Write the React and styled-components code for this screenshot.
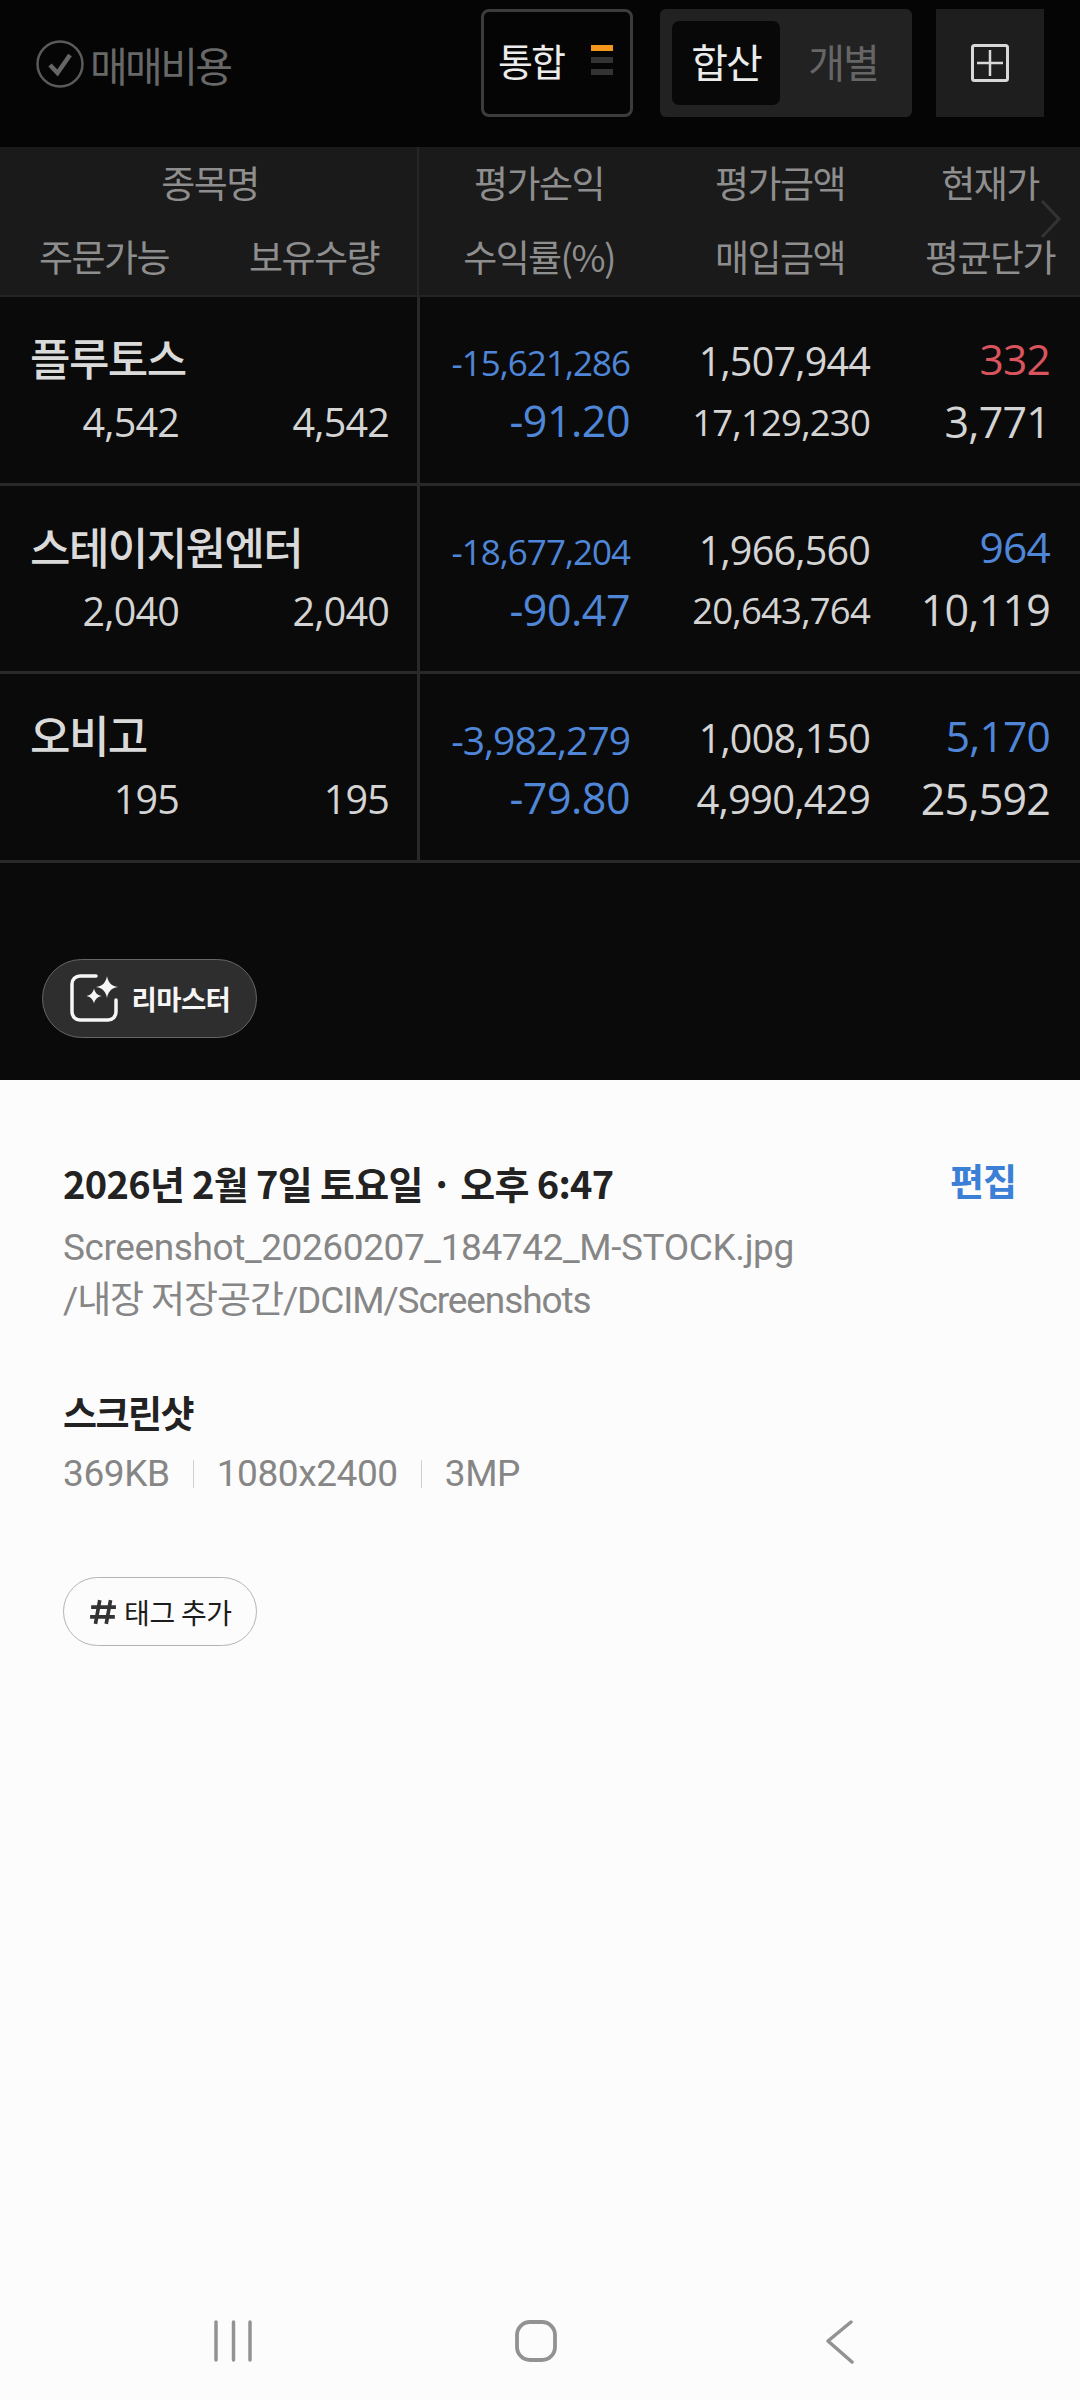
import React from 'react';
import styled, { createGlobalStyle } from 'styled-components';

const Global = createGlobalStyle`
  html, body { margin: 0; padding: 0; background: #fcfcfc; }
  body { font-family: "Roboto", "Noto Sans CJK KR", sans-serif; }
  * { box-sizing: border-box; }
`;

const KR = '"Noto Sans CJK KR", sans-serif';
const NUM = '"Open Sans", "Noto Sans CJK KR", sans-serif';
const BLUE = '#4f86d8';
const RED = '#d9545c';

const Page = styled.div`
  width: 1080px;
  height: 2400px;
  display: flex;
  flex-direction: column;
  background: #fcfcfc;
`;
const Dark = styled.div`
  height: 1080px;
  background: #0a0a0a;
  display: flex;
  flex-direction: column;
`;
const TopBar = styled.div`
  height: 147px;
  background: #050505;
  display: flex;
  align-items: flex-start;
  padding: 9px 36px 0 36px;
`;
const CostCheck = styled.div`
  display: flex;
  align-items: center;
  gap: 6px;
  margin-top: 31px;
  font: 400 41px/48px ${KR};
  letter-spacing: -2.6px;
  color: #686868;
`;
const Controls = styled.div`
  margin-left: auto;
  display: flex;
`;
const Merged = styled.div`
  width: 152px;
  height: 108px;
  border: 3px solid #3c3c3c;
  border-radius: 8px;
  display: flex;
  align-items: center;
  padding-left: 14px;
  gap: 27px;
  font: 400 38px/44px ${KR};
  letter-spacing: -2px;
  color: #ececec;
  margin-right: 27px;
  padding-bottom: 6px;
`;
const Bars = styled.div`
  display: flex;
  flex-direction: column;
  gap: 6px;
`;
const Bar = styled.div`
  width: 22px;
  height: 6px;
  background: ${({ $on }) => ($on ? '#f4961c' : '#333333')};
`;
const Segment = styled.div`
  width: 252px;
  height: 108px;
  background: #222222;
  border-radius: 6px;
  padding: 12px;
  display: flex;
  margin-right: 24px;
`;
const SegmentItem = styled.div`
  width: 108px;
  height: 84px;
  border-radius: 7px;
  background: ${({ $active }) => ($active ? '#080808' : 'transparent')};
  color: ${({ $active }) => ($active ? '#ececec' : '#666666')};
  margin-left: ${({ $active }) => ($active ? '0' : '9px')};
  font: 400 40px/80px ${KR};
  letter-spacing: -2px;
  text-align: center;
`;
const GridButton = styled.div`
  width: 108px;
  height: 108px;
  background: #1e1e1e;
  display: flex;
  align-items: center;
  justify-content: center;
`;

const Header = styled.div`
  position: relative;
  height: 150px;
  background: #1a1a1a;
  display: flex;
  font: 400 37px/50px ${KR};
  letter-spacing: -1.6px;
  color: #8e8e8e;
  border-bottom: 2px solid #242424;
`;
const HeaderLeft = styled.div`
  width: 419px;
  border-right: 2px solid #262626;
  display: grid;
  grid-template-columns: 208px 212px;
  grid-template-rows: 70px 77px;
  align-items: center;
  justify-items: center;
`;
const HeaderRight = styled.div`
  display: grid;
  grid-template-columns: 240px 242px 178px;
  grid-template-rows: 70px 77px;
  align-items: center;
  justify-items: center;
`;
const NameHead = styled.div`
  grid-column: 1 / 3;
`;
const Chevron = styled.svg`
  position: absolute;
  right: 18px;
  top: 52px;
`;

const Row = styled.div`
  height: 188.5px;
  display: flex;
  border-bottom: 3px solid #292929;
`;
const RowLeft = styled.div`
  width: 420px;
  border-right: 3px solid #292929;
  padding: 35px 0 0 30px;
`;
const Name = styled.div`
  font: 500 44px/50px ${KR};
  letter-spacing: -1.6px;
  color: #dadada;
`;
const Quantities = styled.div`
  display: grid;
  grid-template-columns: 149px 210px;
  margin-top: 15px;
  font: 400 39.5px/50px ${NUM};
  letter-spacing: -0.8px;
  color: #d4d4d4;
  text-align: right;
`;
const RowRight = styled.div`
  flex: 1;
  display: grid;
  grid-template-columns: 210px 240px 180px;
  grid-template-rows: 50px 50px;
  row-gap: 13px;
  padding-top: 39px;
  align-items: center;
  text-align: right;
`;
const Cell = styled.div`
  font-family: ${NUM};
  font-size: ${({ $size }) => $size || 39.5}px;
  letter-spacing: ${({ $tight }) => $tight || -0.8}px;
  color: ${({ $color }) => $color || '#d4d4d4'};
  line-height: 50px;
  margin-top: ${({ $lift }) => ($lift ? -$lift : 0)}px;
`;

const Remaster = styled.div`
  margin: 96px 0 0 42px;
  width: 215px;
  height: 79px;
  border-radius: 40px;
  background: #2e2e2e;
  border: 1.5px solid #666666;
  display: flex;
  align-items: center;
  padding-left: 26.5px;
  gap: 14px;
  font: 700 27.5px/34px ${KR};
  letter-spacing: -0.6px;
  color: #f6f6f6;
`;

const Sheet = styled.div`
  flex: 1;
  display: flex;
  flex-direction: column;
  padding: 78px 64px 0 63px;
  background: #fcfcfc;
`;
const TitleRow = styled.div`
  display: flex;
  justify-content: space-between;
  align-items: flex-start;
`;
const Title = styled.div`
  font: 700 38px/54px ${KR};
  letter-spacing: -0.7px;
  color: #222222;
  margin-top: -2px;
`;
const Edit = styled.div`
  font: 700 37px/46px ${KR};
  letter-spacing: -1px;
  color: #3b80d6;
  margin-top: -1px;
`;
const Muted = styled.div`
  font: 400 37px/52px "Roboto", ${KR};
  letter-spacing: -0.4px;
  color: #868686;
`;
const FileName = styled(Muted)`
  margin-top: 12px;
`;
const PathLine = styled(Muted)`
  margin-top: 1px;
  letter-spacing: -1.1px;
`;
const SectionTitle = styled.div`
  margin-top: 58px;
  font: 700 37px/54px ${KR};
  letter-spacing: -1.5px;
  color: #222222;
`;
const Meta = styled(Muted)`
  margin-top: 9px;
  display: flex;
  align-items: center;
`;
const MetaSep = styled.span`
  width: 1px;
  height: 28px;
  margin: 0 23px;
  background: #d0d0d0;
`;
const TagPill = styled.div`
  margin-top: 77px;
  width: 194px;
  height: 69px;
  border: 1.5px solid #b4b4b4;
  border-radius: 35px;
  display: flex;
  align-items: center;
  padding-left: 25px;
  gap: 7px;
  font: 400 28px/34px ${KR};
  letter-spacing: -0.3px;
  color: #1c1c1c;
`;
const Spacer = styled.div`
  flex: 1;
`;
const NavBar = styled.div`
  height: 100px;
  margin: 0 -64px 0 -63px;
  display: grid;
  grid-template-columns: 303px 310px 1fr;
  align-items: start;
  padding-top: 20px;
  padding-left: 212px;
`;
const BlueText = styled.span`
  color: ${BLUE};
`;

const CheckIcon = () => (
  <svg width="48" height="48" viewBox="0 0 48 48" fill="none">
    <circle cx="24" cy="24" r="22.5" stroke="#5a5a5a" strokeWidth="2.5" />
    <path d="M14 25l7.5 8L34 15" stroke="#666666" strokeWidth="4.5" />
  </svg>
);

const PanelIcon = () => (
  <svg width="38" height="38" viewBox="0 0 38 38" fill="none" stroke="#d8d8d8">
    <rect x="1.5" y="1.5" width="35" height="35" rx="2" strokeWidth="3" />
    <path d="M19 6v26M6 19h26" strokeWidth="2.5" />
  </svg>
);

const SparkIcon = () => (
  <svg width="48" height="48" viewBox="0 0 48 48" fill="none">
    <path
      d="M26 2H10a8 8 0 0 0-8 8v28a8 8 0 0 0 8 8h28a8 8 0 0 0 8-8V26"
      stroke="#f6f6f6"
      strokeWidth="3.5"
      strokeLinecap="round"
    />
    <path d="M37 2c1 6 4 10 11 11-7 1-10 5-11 11-1-6-4-10-11-11 7-1 10-5 11-11z" fill="#f6f6f6" />
    <path d="M24 14.5c1 4 3 6.500 7.500 7.500-4.500 1-6.500 3.500-7.500 7.500-1-4-3-6.500-7.500-7.500 4.500-1 6.500-3.500 7.500-7.500z" fill="#f6f6f6" />
  </svg>
);

const HashIcon = () => (
  <svg width="28" height="28" viewBox="0 0 26 26" fill="none" stroke="#333333" strokeWidth="3.4">
    <path d="M10 2L6 24M20 2l-4 22M2 8.5h23M1 17.5h23" />
  </svg>
);

const RecentsIcon = () => (
  <svg width="42" height="42" viewBox="0 0 42 42" fill="none" stroke="#929292" strokeWidth="3.5" strokeLinecap="round">
    <path d="M4 2v38M21.500 2v38M38 2v38" />
  </svg>
);

const HomeIcon = () => (
  <svg width="42" height="42" viewBox="0 0 42 42" fill="none" stroke="#929292" strokeWidth="3.8">
    <rect x="2" y="2" width="38" height="38" rx="13" />
  </svg>
);

const BackIcon = () => (
  <svg width="30" height="44" viewBox="0 0 30 44" fill="none" stroke="#929292" strokeWidth="3.5" strokeLinecap="round" strokeLinejoin="round">
    <path d="M26 2L3 21l24 21" />
  </svg>
);

const holdings = [
  { name: '플루토스', qty: '4,542', loss: '-15,621,286', rate: '-91.20', value: '1,507,944', cost: '17,129,230', price: '332', priceColor: RED, avg: '3,771' },
  { name: '스테이지원엔터', qty: '2,040', loss: '-18,677,204', rate: '-90.47', value: '1,966,560', cost: '20,643,764', price: '964', priceColor: BLUE, avg: '10,119' },
  { name: '오비고', qty: '195', loss: '-3,982,279', rate: '-79.80', value: '1,008,150', cost: '4,990,429', price: '5,170', priceColor: BLUE, avg: '25,592' },
];

const HoldingRow = ({ item }) => (
  <Row>
    <RowLeft>
      <Name>{item.name}</Name>
      <Quantities>
        <span>{item.qty}</span>
        <span>{item.qty}</span>
      </Quantities>
    </RowLeft>
    <RowRight>
      <Cell $size={item.loss.length > 10 ? 35 : 39} $tight={-1} $lift={-4}>
        <BlueText>{item.loss}</BlueText>
      </Cell>
      <Cell>{item.value}</Cell>
      <Cell $size={42.5} $color={item.priceColor} $lift={5}>{item.price}</Cell>
      <Cell $size={43} $tight={-0.5} $color={BLUE} $lift={6}>{item.rate}</Cell>
      <Cell $size={item.cost.length > 9 ? 36.5 : 40} $lift={5}>{item.cost}</Cell>
      <Cell $size={43} $lift={5}>{item.avg}</Cell>
    </RowRight>
  </Row>
);

export default function App() {
  return (
    <Page>
      <Global />
      <Dark>
        <TopBar>
          <CostCheck>
            <CheckIcon />
            매매비용
          </CostCheck>
          <Controls>
            <Merged>
              통합
              <Bars>
                <Bar $on />
                <Bar />
                <Bar />
              </Bars>
            </Merged>
            <Segment>
              <SegmentItem $active>합산</SegmentItem>
              <SegmentItem>개별</SegmentItem>
            </Segment>
            <GridButton>
              <PanelIcon />
            </GridButton>
          </Controls>
        </TopBar>
        <Header>
          <HeaderLeft>
            <NameHead>종목명</NameHead>
            <span>주문가능</span>
            <span>보유수량</span>
          </HeaderLeft>
          <HeaderRight>
            <span>평가손익</span>
            <span>평가금액</span>
            <span>현재가</span>
            <span>수익률(%)</span>
            <span>매입금액</span>
            <span>평균단가</span>
          </HeaderRight>
          <Chevron width="22" height="40" viewBox="0 0 22 40" fill="none" stroke="#333333" strokeWidth="3">
            <path d="M2 2l17 18L2 38" />
          </Chevron>
        </Header>
        {holdings.map((item) => (
          <HoldingRow item={item} key={item.name} />
        ))}
        <Remaster>
          <SparkIcon />
          리마스터
        </Remaster>
      </Dark>
      <Sheet>
        <TitleRow>
          <Title>2026년 2월 7일 토요일 · 오후 6:47</Title>
          <Edit>편집</Edit>
        </TitleRow>
        <FileName>Screenshot_20260207_184742_M-STOCK.jpg</FileName>
        <PathLine>/내장 저장공간/DCIM/Screenshots</PathLine>
        <SectionTitle>스크린샷</SectionTitle>
        <Meta>
          369KB
          <MetaSep />
          1080x2400
          <MetaSep />
          3MP
        </Meta>
        <TagPill>
          <HashIcon />
          태그 추가
        </TagPill>
        <Spacer />
        <NavBar>
          <RecentsIcon />
          <HomeIcon />
          <BackIcon />
        </NavBar>
      </Sheet>
    </Page>
  );
}
